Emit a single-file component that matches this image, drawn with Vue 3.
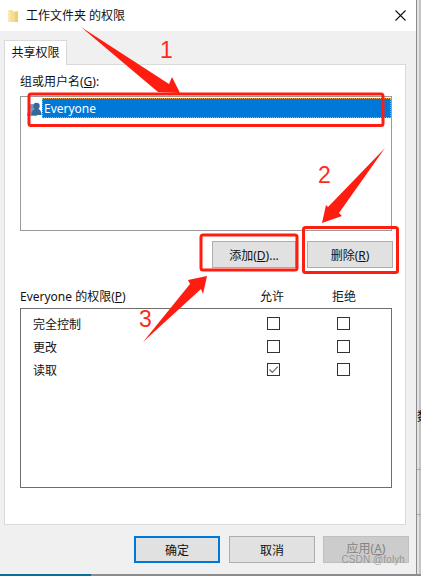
<script setup>
const rows = [
  { name: '完全控制', allow: false },
  { name: '更改', allow: false },
  { name: '读取', allow: true },
]
</script>

<template>
  <div class="screen">
    <div class="top">
      <div class="window">
        <header class="titlebar">
          <svg class="folder" width="10" height="13" viewBox="0 0 10 13">
            <path d="M0 1h4l1 1.5h5V13H0z" fill="#f8dc8e" />
            <path d="M0 1h2.5v12H0z" fill="#fbe9b5" />
            <path d="M7 2.5h3V13H7z" fill="#f0cc70" />
          </svg>
          <span class="title">工作文件夹 的权限</span>
          <svg class="close" width="11" height="11" viewBox="0 0 11 11">
            <path d="M0.5 0.5l10 10M10.5 0.5l-10 10" stroke="#111" stroke-width="1.1" fill="none" />
          </svg>
        </header>

        <main class="body">
          <div class="tab">共享权限</div>
          <section class="panel">
            <div class="group-label">组或用户名(<u>G</u>):</div>
            <div class="user-list">
              <div class="user-row">
                <svg class="user-icon" width="15" height="15" viewBox="0 0 15 15">
                  <circle cx="5" cy="5" r="3" fill="#6f97bd" />
                  <path d="M0 14c0-4 2-6 5-6s5 2 5 6z" fill="#6f97bd" />
                  <circle cx="9.5" cy="4" r="3.2" fill="#34699d" />
                  <path d="M4.5 13c0-4 2-6.500 5-6.500s5 2.500 5 6.500z" fill="#34699d" />
                </svg>
                <span class="user-selected">Everyone</span>
              </div>
            </div>

            <div class="actions">
              <button class="btn btn-add">添加(<u>D</u>)...</button>
              <button class="btn btn-remove">删除(<u>R</u>)</button>
            </div>

            <div class="perm-head">
              <span class="perm-title">Everyone 的权限(<u>P</u>)</span>
              <span class="perm-col">允许</span>
              <span class="perm-col">拒绝</span>
            </div>
            <div class="perm-list">
              <div v-for="row in rows" :key="row.name" class="perm-row">
                <span class="perm-name">{{ row.name }}</span>
                <span class="check">
                  <svg v-if="row.allow" width="11" height="11" viewBox="0 0 11 11">
                    <path d="M1.500 5.500l2.800 2.800 5.500-5.600" stroke="#666" stroke-width="1.200" fill="none" />
                  </svg>
                </span>
                <span class="check"></span>
              </div>
            </div>
          </section>

          <footer class="footer">
            <button class="btn btn-foot btn-default">确定</button>
            <button class="btn btn-foot btn-cancel">取消</button>
            <button class="btn btn-foot btn-disabled"><span class="btn-label">应用(<u>A</u>)</span></button>
          </footer>
        </main>
      </div>
      <aside class="backdrop">
        <span class="backdrop-char">数</span>
        <span class="backdrop-line"></span>
        <span class="backdrop-line"></span>
      </aside>
    </div>
    <div class="taskbar"><span class="taskbar-active"></span></div>

    <span class="watermark">CSDN @folyh</span>

    <svg class="notes" width="421" height="576" viewBox="0 0 421 576">
      <g fill="#ff1c10">
        <path d="M81 27 L169 84 L172 77 L180 93 L158 92 Z" />
        <path d="M385 148 L339 213 L342 216 L322 223 L326 205 L328 207 Z" />
        <path d="M143 342 L190 284 L188 280 L207 276 L203 294 L201 289 Z" />
      </g>
      <g fill="none" stroke="#ff1c10" stroke-width="3">
        <rect x="29" y="94" width="354" height="31.500" rx="2" />
        <rect x="201" y="235" width="96" height="35" rx="2" />
        <rect x="303.500" y="227.500" width="94" height="45" rx="2" />
      </g>
      <g class="note-num" fill="#ff2a1c">
        <text x="160" y="58">1</text>
        <text x="318" y="183">2</text>
        <text x="139" y="327">3</text>
      </g>
    </svg>
  </div>
</template>

<style scoped>
.screen {
  position: relative;
  width: 421px;
  height: 576px;
  overflow: hidden;
  font-family: "Noto Sans", "Noto Sans CJK SC", sans-serif;
  font-size: 12px;
  color: #111;
  background: #d4d4d4;
}
.top {
  display: flex;
  height: 574px;
}
.window {
  width: 416px;
  flex: none;
  display: flex;
  flex-direction: column;
  border-right: 1px solid #8c8c8c;
  box-sizing: content-box;
  background: #f0f0f0;
}
.titlebar {
  height: 31px;
  flex: none;
  display: flex;
  align-items: center;
  padding: 0 10px 0 8px;
  background: #fff;
}
.folder {
  flex: none;
}
.title {
  margin-left: 8px;
  flex: 1;
  line-height: 16px;
  font-size: 12px;
}
.body {
  flex: 1;
  display: flex;
  flex-direction: column;
  align-items: flex-start;
  padding: 9px 0 0 4px;
}
.tab {
  position: relative;
  z-index: 1;
  width: 63px;
  height: 25px;
  box-sizing: border-box;
  margin-bottom: -1px;
  border: 1px solid #d9d9d9;
  border-bottom: none;
  background: #fff;
  text-align: center;
  line-height: 24px;
}
.panel {
  width: 402px;
  height: 461px;
  box-sizing: border-box;
  border: 1px solid #d9d9d9;
  background: #fff;
  padding: 9px 13px 0 15px;
}
.group-label {
  height: 16px;
  line-height: 16px;
  white-space: nowrap;
}
.user-list {
  height: 135px;
  margin-top: 6px;
  box-sizing: border-box;
  border: 1px solid #9a9a9a;
  padding: 1px 0 0 6px;
}
.user-row {
  display: flex;
  align-items: center;
  height: 20px;
}
.user-icon {
  flex: none;
  margin-top: 3px;
}
.user-selected {
  flex: 1;
  height: 20px;
  box-sizing: border-box;
  border: 1px dotted #f0a040;
  background: #0078d7;
  color: #fff;
  line-height: 19px;
  padding-left: 1px;
}
.actions {
  display: flex;
  justify-content: flex-end;
  margin: 10px -1px 0 0;
  gap: 11px;
}
.btn {
  height: 27px;
  box-sizing: border-box;
  border: 1px solid #adadad;
  background: #e1e1e1;
  padding: 0;
  font: inherit;
  color: #111;
}
.btn-add {
  width: 84px;
}
.btn-remove {
  width: 86px;
}
.perm-head {
  display: flex;
  align-items: center;
  height: 16px;
  margin-top: 20px;
  padding-right: 36px;
}
.perm-title {
  flex: 1;
  white-space: nowrap;
}
.perm-col {
  width: 24px;
  text-align: center;
}
.perm-col + .perm-col {
  margin-left: 48px;
}
.perm-list {
  height: 180px;
  margin-top: 4px;
  box-sizing: border-box;
  border: 1px solid #6d6d6d;
  padding: 3px 41px 0 12px;
}
.perm-row {
  display: flex;
  align-items: center;
  height: 23px;
}
.perm-name {
  flex: 1;
}
.check {
  width: 13px;
  height: 13px;
  box-sizing: border-box;
  border: 1px solid #333;
  display: flex;
  align-items: center;
  justify-content: center;
  background: #fff;
}
.check + .check {
  margin-left: 57px;
}
.footer {
  display: flex;
  margin-top: 11px;
  padding-left: 130px;
}
.btn-foot {
  width: 86px;
}
.btn-default {
  border: 2px solid #0078d7;
}
.btn-cancel {
  margin-left: 9px;
}
.btn-disabled {
  margin-left: 8px;
  background: #cccccc;
  border-color: #bfbfbf;
  color: #838383;
}
.btn-label {
  display: block;
  margin-top: -3px;
}
.backdrop {
  flex: 1;
  min-width: 0;
  overflow: hidden;
  display: flex;
  flex-direction: column;
  align-items: flex-start;
  padding-top: 409px;
  background: linear-gradient(to right, #e2e2e2 0 2px, #c4c4c4 2px);
}
.backdrop-char {
  font-size: 12px;
  line-height: 16px;
  color: #111;
  white-space: nowrap;
}
.backdrop-line {
  width: 100%;
  height: 1px;
  margin-top: 44px;
  background: #a8a8a8;
}
.backdrop-line + .backdrop-line {
  margin-top: 44px;
}
.taskbar {
  height: 2px;
  background: #8c8c8c;
}
.taskbar-active {
  display: block;
  width: 91px;
  height: 2px;
  background: #0a6f9a;
}
.watermark {
  position: absolute;
  right: 16px;
  bottom: 10px;
  font-family: "Liberation Sans", sans-serif;
  font-size: 10px;
  line-height: 13px;
  letter-spacing: 0.1px;
  color: rgba(140, 140, 140, 0.85);
}
.notes {
  position: absolute;
  left: 0;
  top: 0;
  pointer-events: none;
}
.note-num {
  font-family: "Liberation Sans", sans-serif;
  font-size: 23px;
}
</style>
